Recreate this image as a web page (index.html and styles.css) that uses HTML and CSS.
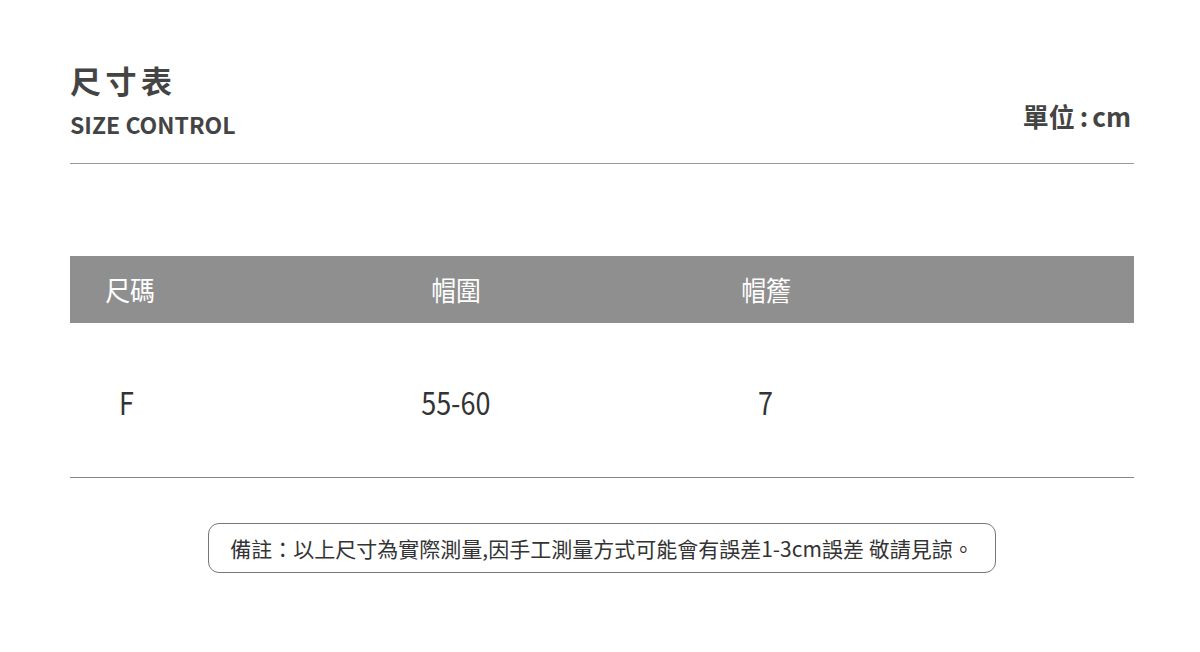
FILE: index.html
```html
<!DOCTYPE html>
<html lang="zh-Hant">
<head>
<meta charset="utf-8">
<link rel="stylesheet" href="styles.css">
</head>
<body>
<div class="page">
  <header class="head">
    <div class="titles">
      <div class="title">尺寸表</div>
      <div class="subtitle">SIZE CONTROL</div>
    </div>
    <div class="unit">單位<span class="colon">:</span>cm</div>
  </header>
  <div class="table">
    <div class="row thead">
      <div class="c1"><span class="sq">尺碼</span></div>
      <div class="c"><span class="sq">帽圍</span></div>
      <div class="c"><span class="sq">帽簷</span></div>
    </div>
    <div class="row tbody">
      <div class="c1 d1"><span class="sq">F</span></div>
      <div class="c"><span class="sq">55-60</span></div>
      <div class="c"><span class="sq">7</span></div>
    </div>
  </div>
  <div class="note-wrap">
    <div class="note">備註：以上尺寸為實際測量,因手工測量方式可能會有誤差1-3cm誤差 敬請見諒。</div>
  </div>
</div>
</body>
</html>
```
FILE: styles.css
```css
* { box-sizing: border-box; margin: 0; padding: 0; }
html, body { background: #fff; }
body {
  font-family: "Noto Sans CJK TC", "Noto Sans", sans-serif;
  color: #444;
}
.page {
  width: 1200px;
  height: 652px;
  padding: 0 66px 0 70px;
}
.head {
  display: flex;
  justify-content: space-between;
  align-items: flex-end;
  padding-top: 60px;
  padding-bottom: 25px;
  border-bottom: 1px solid #999;
}
.title {
  font-size: 31px;
  font-weight: 700;
  letter-spacing: 4.5px;
  line-height: 40px;
  color: #444;
}
.subtitle {
  margin-top: 10px;
  font-size: 23px;
  font-weight: 700;
  line-height: 28px;
  color: #444;
}
.unit {
  font-size: 26px;
  font-weight: 700;
  line-height: 32px;
  margin-bottom: 6px;
  margin-right: 3px;
  color: #444;
}
.colon {
  margin: 0 4px 0 5px;
}
.table {
  margin-top: 92px;
  border-bottom: 1px solid #888;
}
.row {
  display: grid;
  grid-template-columns: 231px 310px 310px 1fr;
  align-items: center;
}
.sq {
  display: inline-block;
}
.thead {
  height: 67px;
  background: #8f8f8f;
  color: #fff;
  font-size: 27px;
}
.thead .sq {
  transform: scaleX(0.92);
}
.tbody {
  height: 154px;
  padding-top: 2px;
  color: #333;
  font-size: 31px;
}
.tbody .sq {
  transform: scaleX(0.87);
}
.c1 {
  padding-right: 111px;
  text-align: center;
}
.d1 {
  padding-right: 118px;
}
.c {
  text-align: center;
}
.note-wrap {
  display: flex;
  justify-content: center;
  margin-top: 45px;
}
.note {
  width: 788px;
  height: 50px;
  border: 1px solid #777;
  border-radius: 11px;
  display: flex;
  align-items: center;
  justify-content: center;
  font-size: 21px;
  color: #333;
  white-space: nowrap;
}
```
